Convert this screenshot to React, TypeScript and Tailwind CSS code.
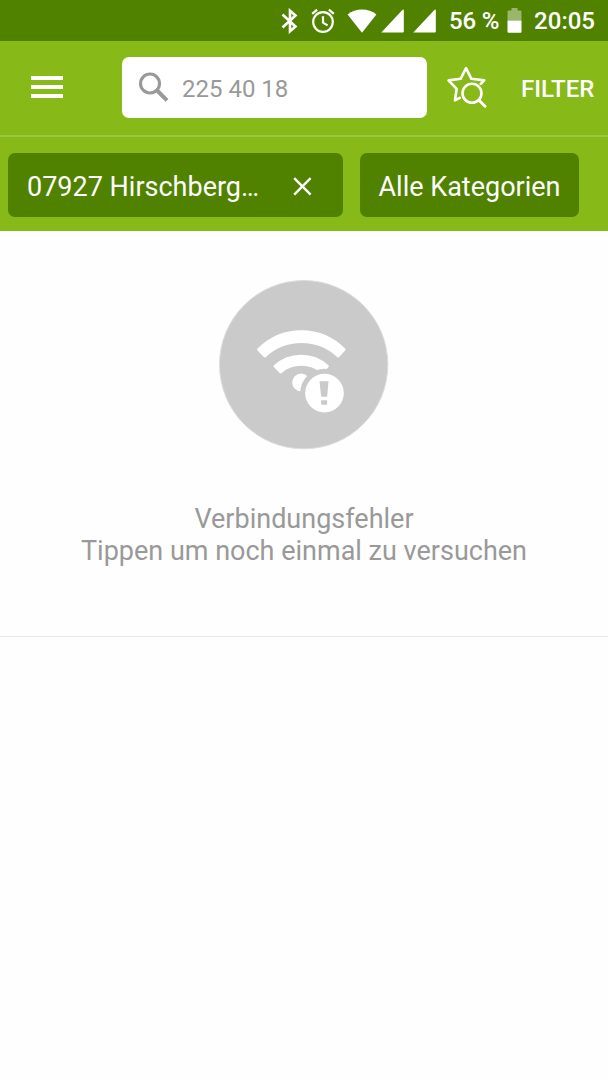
import type { ReactNode } from 'react';

const BluetoothIcon = () => (
  <svg className="w-[17px] h-[26px] shrink-0" viewBox="0 0 17 26" fill="none" stroke="#fff" strokeWidth="2.6">
    <path d="M1.5 6.5 L14.5 18.5 L9 23.3 V2.7 L14.5 7.5 L1.5 19.5" />
  </svg>
);

const AlarmIcon = () => (
  <svg className="w-[24px] h-[26px] shrink-0" viewBox="0 0 24 26" fill="none" stroke="#fff" strokeWidth="2.2">
    <circle cx="12" cy="14" r="9.8" />
    <path d="M12 8.2v6.4l4.6 2.8M1.2 5.8l4.9-4.2M22.8 5.8l-4.9-4.2" />
  </svg>
);

const WifiIcon = () => (
  <svg className="w-[30px] h-[24px] shrink-0" viewBox="0 0 30 24" fill="#fff">
    <path d="M15 23.8 L0.6 5.4 C4.6 2.2 9.6 0.4 15 0.4 S25.4 2.2 29.4 5.4 Z" />
  </svg>
);

const SignalIcon = () => (
  <svg className="w-[23px] h-[24px] shrink-0" viewBox="0 0 23 24" fill="#fff">
    <path d="M0.3 23.5 L21.6 0.8 Q22.8 0.2 22.8 1.6 V22.5 Q22.8 23.5 21.8 23.5 Z" />
  </svg>
);

const BatteryIcon = () => (
  <svg className="w-[15px] h-[25px] shrink-0" viewBox="0 0 15 25" fill="#fff">
    <path fillOpacity="0.42" d="M4.5 0h6v2.5H13.5a1 1 0 0 1 1 1V12.5H0.5V3.5a1 1 0 0 1 1-1H4.5Z" />
    <path d="M0.5 12.5h14v11.3a1 1 0 0 1-1 1h-12a1 1 0 0 1-1-1Z" />
  </svg>
);

const SearchIcon = () => (
  <svg className="w-[31px] h-[30px] shrink-0" viewBox="0 0 31 30" fill="none" stroke="#999">
    <circle cx="12" cy="11.5" r="9.5" strokeWidth="3.1" />
    <path d="M18.6 18 L29 28.4" strokeWidth="4" />
  </svg>
);

const SavedSearchIcon = () => (
  <svg className="w-[40px] h-[42px] shrink-0" viewBox="0 0 40 42" fill="none" stroke="#fff" strokeWidth="2.6" strokeLinejoin="round" strokeLinecap="round">
    <path d="M12.8 31.9 L8 34.4 L9.6 22.8 L1.6 14.4 L13.6 12.8 L19 2.2 L24.4 12.8 L37.2 14.4 L33.8 17.8" />
    <circle cx="25" cy="27.3" r="9.5" />
    <path d="M32 34.2 L38 40.2" strokeWidth="2.9" />
  </svg>
);

const CloseIcon = () => (
  <svg className="w-[19px] h-[19px] shrink-0 mt-[3px]" viewBox="0 0 19 19" fill="none" stroke="#fff" strokeWidth="2.4">
    <path d="M1.2 1.2 L17.6 17.6 M17.6 1.2 L1.2 17.6" />
  </svg>
);

const ConnectionErrorIcon = () => (
  <svg className="w-[170px] h-[170px]" viewBox="27.5 29.5 510 510">
    <circle cx="281.5" cy="283.5" r="252.5" fill="#cacaca" stroke="#deded6" strokeWidth="3" />
    <g fill="#fff" stroke="#fff" strokeWidth="8" strokeLinejoin="round">
      <path d="M146 238 A180 180 0 0 1 403 238 L385 258 A161 161 0 0 0 165 258 Z" />
      <path d="M195 288 A118 118 0 0 1 353 288 L337 306 A96 96 0 0 0 212 306 Z" />
    </g>
    <circle cx="274" cy="337" r="27" fill="#fff" />
    <circle cx="344" cy="369" r="73" fill="#cacaca" />
    <circle cx="344" cy="369" r="58" fill="#fff" />
    <path d="M329 333h27l-4 47h-18ZM334 390h18v14h-18Z" fill="#cacaca" />
  </svg>
);

function Chip({ className, children }: { className: string; children: ReactNode }) {
  return (
    <button className={`h-[64px] rounded-[7px] bg-[#508200] text-white text-[27px] flex items-center whitespace-nowrap shrink-0 ${className}`}>
      {children}
    </button>
  );
}

export default function App() {
  return (
    <div className="w-full h-[1080px] bg-[#fefefe] font-['Roboto',sans-serif] flex flex-col overflow-hidden">
      <div className="h-[41px] shrink-0 bg-[#508200] flex items-center justify-end pr-[13px] text-white text-[24px] font-medium leading-none">
        <BluetoothIcon />
        <span className="w-[13px]" />
        <AlarmIcon />
        <span className="w-[12px]" />
        <WifiIcon />
        <span className="w-[4px]" />
        <SignalIcon />
        <span className="w-[9px]" />
        <SignalIcon />
        <span className="w-[65px] pr-[2px] text-right whitespace-nowrap mr-[6px] tracking-[-0.2px]">56 %</span>
        <BatteryIcon />
        <span className="ml-[12px]">20:05</span>
      </div>

      <header className="h-[190px] shrink-0 bg-[#87b918]">
        <div className="h-[96px] pb-[2px] border-b-2 border-[#9bc545] flex items-center">
          <button className="ml-[31px] w-[32px] flex flex-col gap-[5px]">
            <span className="h-[4px] w-full bg-white" />
            <span className="h-[4px] w-full bg-white" />
            <span className="h-[4px] w-full bg-white" />
          </button>
          <div className="ml-[59px] w-[305px] h-[61px] rounded-[7px] bg-white flex items-center pl-[16px]">
            <SearchIcon />
            <span className="ml-[13px] pt-[3px] text-[24px] text-[#999] whitespace-nowrap">225 40 18</span>
          </div>
          <button className="ml-[20px]">
            <SavedSearchIcon />
          </button>
          <button className="ml-[34px] pt-[4px] text-white text-[24px] font-medium whitespace-nowrap">FILTER</button>
        </div>
        <div className="flex gap-[17px] pl-[8px] pt-[16px]">
          <Chip className="w-[335px] pl-[19px]">
            <span className="w-[266px] pt-[4px] text-left">07927 Hirschberg…</span>
            <CloseIcon />
          </Chip>
          <Chip className="w-[219px] justify-center">
            <span className="pt-[4px]">Alle Kategorien</span>
          </Chip>
        </div>
      </header>

      <main className="h-[406px] shrink-0 border-b border-[#e8e8e8] flex flex-col items-center pt-[49px]">
        <ConnectionErrorIcon />
        <p className="mt-[53px] text-[27px] leading-[32px] text-[#999] text-center">
          Verbindungsfehler
          <br />
          Tippen um noch einmal zu versuchen
        </p>
      </main>
    </div>
  );
}
